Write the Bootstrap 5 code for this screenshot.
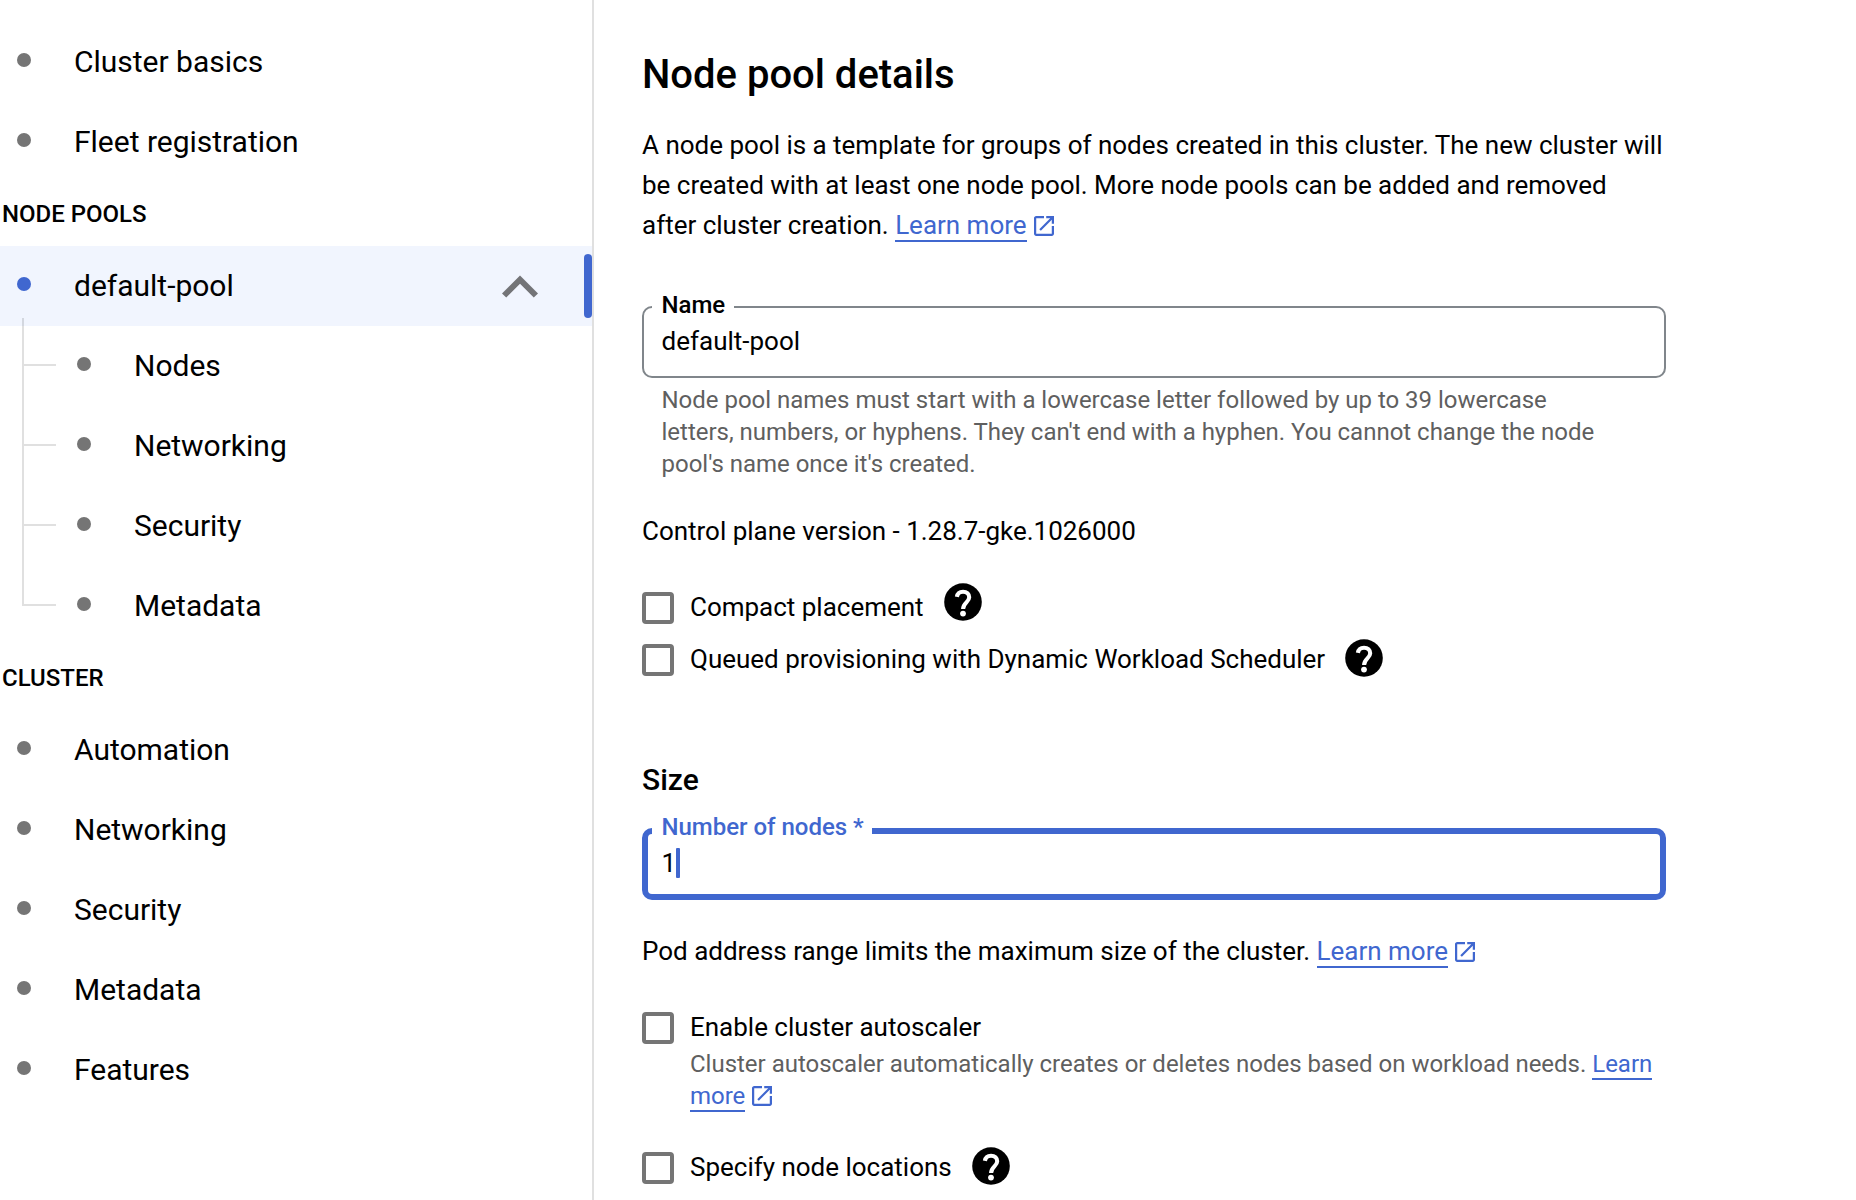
<!DOCTYPE html>
<html lang="en">
<head>
<meta charset="utf-8">
<meta name="viewport" content="width=device-width, initial-scale=1">
<title>Node pool details</title>
<link href="https://cdn.jsdelivr.net/npm/bootstrap@5.3.0/dist/css/bootstrap.min.css" rel="stylesheet">
<style>
  :root { --accent: #4067cf; --muted: #5f5f5f; --rule: #e0e0e0; --dot: #757575; }
  body { font-family: Roboto, "Liberation Sans", sans-serif; font-size: 26px; line-height: 40px; letter-spacing: -.012px; color: #000; background: #fff; height: 1200px; overflow: hidden; }

  /* Sidebar */
  .side { width: 594px; height: 1200px; border-right: 2px solid var(--rule); padding-top: 22px; }
  .side .nav-link { height: 80px; padding: 0 0 0 17px; font-size: 30px; line-height: 80px; color: #000; }
  .side .nav-link.active { background: #f1f5fe; }
  .bullet { width: 14px; height: 14px; border-radius: 50%; background: var(--dot); margin-right: 43px; margin-bottom: 4px; }
  .active .bullet { background: var(--accent); }
  .side-head { height: 64px; font-size: 24px; line-height: 64px; font-weight: 500; margin: 0; padding-left: 2px; }
  .marker { width: 8px; height: 64px; border-radius: 4px; background: var(--accent); margin-left: 46px; }
  .tree .nav-link { padding-left: 77px; }
  .tree .nav-item { position: relative; }
  .tree .nav-item::before { content: ""; position: absolute; left: 22px; top: -40px; width: 34px; height: 80px; border-left: 2px solid var(--rule); border-bottom: 2px solid var(--rule); }
  .tree .nav-item:first-child::before { top: -8px; height: 48px; border-left-color: rgba(0,0,0,.12); }

  /* Form column */
  .pane { width: 1024px; margin-left: 48px; padding-top: 51px; }
  .pane h1 { font-size: 40px; line-height: 48px; font-weight: 500; margin: 0 0 26px; }
  .pane h2 { font-size: 30px; line-height: 40px; font-weight: 500; margin: 80px 0 28px; }
  .intro { margin: 0 0 61px; }
  .note-line { margin: 31px 0 37px; }
  .ext { color: var(--accent); text-decoration: none; border-bottom: 2px solid var(--accent); }
  .ext-icon { width: 20px; height: 20px; margin-left: 7px; vertical-align: -2px; fill: var(--accent); }

  .field .form-control { height: 72px; border: 2px solid #80868b; border-radius: 10px; padding: 0 18px 2px 17.5px; font-size: 26px; line-height: 40px; color: #000; background: #fff; box-shadow: none; }
  .field label { position: absolute; left: 10px; top: -13px; padding: 0 8.5px 0 9.5px; background: #fff; font-size: 24px; line-height: 24px; font-weight: 500; }
  .field.active-field .form-control { border: 6px solid var(--accent); padding: 0 14px 2px 13.5px; }
  .field.active-field label { color: var(--accent); }
  .caret-bar { position: absolute; left: 34px; top: 20px; width: 4px; height: 30px; border-radius: 1px; background: var(--accent); }
  .hint { font-size: 24px; line-height: 32px; color: var(--muted); margin: 0; }
  .name-hint { padding: 6px 54px 0 19.5px; }
  .auto-hint { padding-left: 48px; margin-bottom: 36px; }

  .option { height: 40px; }
  .option + .option { margin-top: 12px; }
  .option .form-check-input { width: 32px; height: 32px; border: 4px solid var(--dot); border-radius: 4px; margin: 0 16px 0 0; float: none; flex: none; }
  .option label { margin-bottom: 2px; }
  .help { width: 38px; height: 38px; margin-left: 20px; flex: none; }
  .raise-lg { margin-bottom: 12px; }
  .raise-sm { margin-bottom: 4px; }
</style>
<script src="https://cdn.jsdelivr.net/npm/bootstrap@5.3.0/dist/js/bootstrap.bundle.min.js"></script>
</head>
<body>
<svg class="d-none" aria-hidden="true">
  <symbol id="open-new" viewBox="3 3 18 18"><path d="M19 19H5V5h7V3H5c-1.11 0-2 .9-2 2v14c0 1.1.89 2 2 2h14c1.1 0 2-.9 2-2v-7h-2v7zM14 3v2h3.59l-9.83 9.83 1.41 1.41L19 6.41V10h2V3h-7z"/></symbol>
  <symbol id="question" viewBox="-19 -19 38 38"><circle r="18.8"/><path d="M-6.1-5.2C-5.6-8.3-3.3-10.3 0-10.3c3.8 0 6.2 2.5 6.2 5.6C6.2.2.1.8.1 7" fill="none" stroke="#fff" stroke-width="4.1"/><circle cy="11.6" r="2.9" fill="#fff"/></symbol>
</svg>

<div class="d-flex">
  <aside class="side flex-shrink-0">
    <ul class="nav flex-column flex-nowrap">
      <li class="nav-item"><a class="nav-link d-flex align-items-center"><span class="bullet"></span>Cluster basics</a></li>
      <li class="nav-item"><a class="nav-link d-flex align-items-center"><span class="bullet"></span>Fleet registration</a></li>
    </ul>
    <p class="side-head">NODE POOLS</p>
    <ul class="nav flex-column flex-nowrap">
      <li class="nav-item">
        <a class="nav-link active d-flex align-items-center"><span class="bullet"></span>default-pool
          <svg class="ms-auto" width="36" height="23" viewBox="6 8 12 7.41" fill="#737477"><path d="M12 8l-6 6 1.41 1.41L12 10.83l4.59 4.58L18 14z"/></svg>
          <span class="marker"></span></a>
      </li>
    </ul>
    <ul class="nav flex-column flex-nowrap tree">
      <li class="nav-item"><a class="nav-link d-flex align-items-center"><span class="bullet"></span>Nodes</a></li>
      <li class="nav-item"><a class="nav-link d-flex align-items-center"><span class="bullet"></span>Networking</a></li>
      <li class="nav-item"><a class="nav-link d-flex align-items-center"><span class="bullet"></span>Security</a></li>
      <li class="nav-item"><a class="nav-link d-flex align-items-center"><span class="bullet"></span>Metadata</a></li>
    </ul>
    <p class="side-head">CLUSTER</p>
    <ul class="nav flex-column flex-nowrap">
      <li class="nav-item"><a class="nav-link d-flex align-items-center"><span class="bullet"></span>Automation</a></li>
      <li class="nav-item"><a class="nav-link d-flex align-items-center"><span class="bullet"></span>Networking</a></li>
      <li class="nav-item"><a class="nav-link d-flex align-items-center"><span class="bullet"></span>Security</a></li>
      <li class="nav-item"><a class="nav-link d-flex align-items-center"><span class="bullet"></span>Metadata</a></li>
      <li class="nav-item"><a class="nav-link d-flex align-items-center"><span class="bullet"></span>Features</a></li>
    </ul>
  </aside>

  <main class="pane flex-shrink-0">
    <h1>Node pool details</h1>
    <p class="intro">A node pool is a template for groups of nodes created in this cluster. The new cluster will be created with at least one node pool. More node pools can be added and removed after cluster creation. <a class="ext">Learn more</a><svg class="ext-icon"><use href="#open-new"/></svg></p>

    <div class="field position-relative">
      <input class="form-control" id="pool-name" type="text" value="default-pool">
      <label for="pool-name">Name</label>
    </div>
    <p class="hint name-hint">Node pool names must start with a lowercase letter followed by up to 39 lowercase letters, numbers, or hyphens. They can't end with a hyphen. You cannot change the node pool's name once it's created.</p>

    <p class="note-line">Control plane version - 1.28.7-gke.1026000</p>

    <div class="option d-flex align-items-center">
      <input class="form-check-input" type="checkbox" id="compact"><label for="compact">Compact placement</label>
      <svg class="help raise-lg"><use href="#question"/></svg>
    </div>
    <div class="option d-flex align-items-center">
      <input class="form-check-input" type="checkbox" id="queued"><label for="queued">Queued provisioning with Dynamic Workload Scheduler</label>
      <svg class="help raise-sm"><use href="#question"/></svg>
    </div>

    <h2>Size</h2>
    <div class="field active-field position-relative">
      <input class="form-control" id="node-count" type="text" value="1">
      <label for="node-count">Number of nodes *</label>
      <span class="caret-bar"></span>
    </div>
    <p class="note-line">Pod address range limits the maximum size of the cluster. <a class="ext">Learn more</a><svg class="ext-icon"><use href="#open-new"/></svg></p>

    <div class="option d-flex align-items-center">
      <input class="form-check-input" type="checkbox" id="autoscaler"><label for="autoscaler">Enable cluster autoscaler</label>
    </div>
    <p class="hint auto-hint">Cluster autoscaler automatically creates or deletes nodes based on workload needs. <a class="ext">Learn more</a><svg class="ext-icon"><use href="#open-new"/></svg></p>

    <div class="option d-flex align-items-center">
      <input class="form-check-input" type="checkbox" id="locations"><label for="locations">Specify node locations</label>
      <svg class="help raise-sm"><use href="#question"/></svg>
    </div>
  </main>
</div>
</body>
</html>
